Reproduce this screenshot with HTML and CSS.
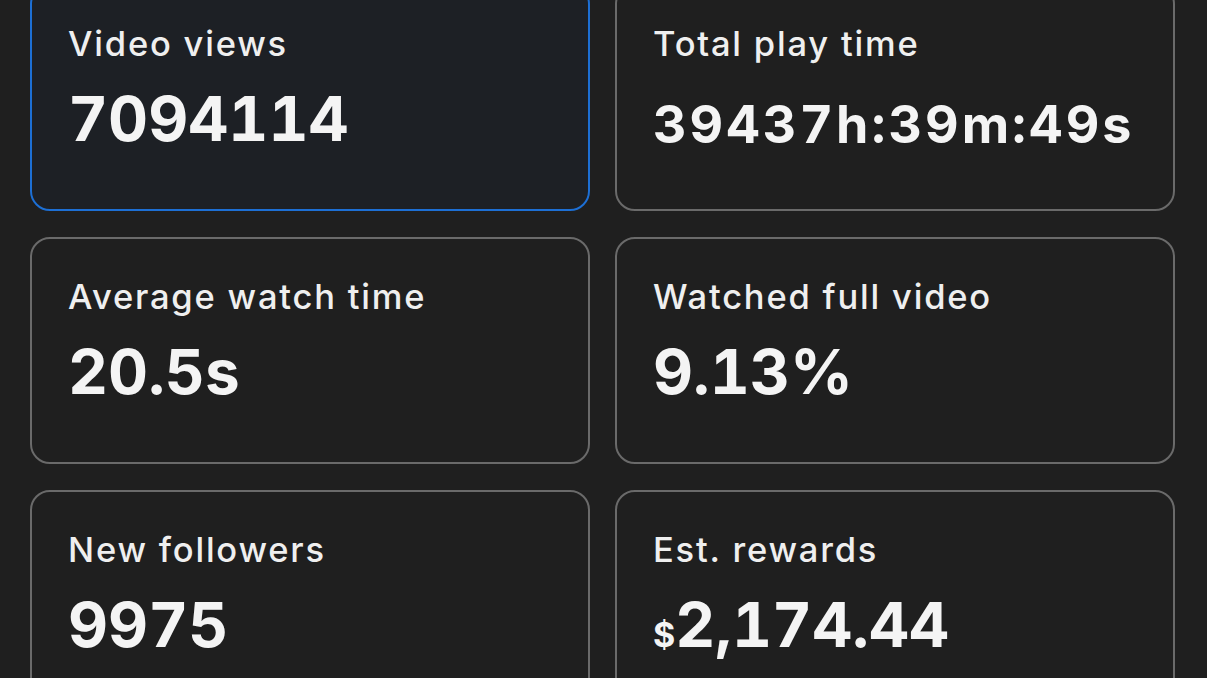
FILE: index.html
```html
<!DOCTYPE html>
<html>
<head>
<meta charset="utf-8">
<link rel="stylesheet" href="styles.css">
</head>
<body>
<div class="grid">
  <div class="card active">
    <div class="label">Video views</div>
    <div class="value">7094114</div>
  </div>
  <div class="card">
    <div class="label">Total play time</div>
    <div class="value small">39437h:39m:49s</div>
  </div>
  <div class="card">
    <div class="label">Average watch time</div>
    <div class="value">20.5s</div>
  </div>
  <div class="card">
    <div class="label">Watched full video</div>
    <div class="value">9.13%</div>
  </div>
  <div class="card">
    <div class="label">New followers</div>
    <div class="value">9975</div>
  </div>
  <div class="card">
    <div class="label">Est. rewards</div>
    <div class="value"><span class="cur">$</span>2,174.44</div>
  </div>
</div>
</body>
</html>
```
FILE: styles.css
```css
html, body {
  margin: 0;
  padding: 0;
  background: #1f1f1f;
  overflow: hidden;
}
body {
  font-family: Inter, "Noto Sans", sans-serif;
  color: #f4f4f4;
}
.grid {
  display: grid;
  grid-template-columns: 560px 560px;
  column-gap: 25px;
  row-gap: 26px;
  margin-top: -16px;
  margin-left: 30px;
}
.card {
  box-sizing: border-box;
  height: 227px;
  border: 2px solid #6a6a6a;
  border-radius: 20px;
  padding: 38px 36px 0 36px;
}
.card.active {
  background: #1d2025;
  border-color: #1d6fd4;
}
.label {
  font-size: 34.5px;
  line-height: 40px;
  font-weight: 500;
  letter-spacing: 1.8px;
  color: #efefef;
}
.value {
  font-size: 62px;
  line-height: 74px;
  font-weight: 700;
  margin-top: 18px;
  height: 74px;
  font-variant-numeric: tabular-nums;
}
.value.small {
  font-size: 52px;
  letter-spacing: 3px;
  padding-top: 6px;
}
.cur {
  font-size: 34px;
}
```
